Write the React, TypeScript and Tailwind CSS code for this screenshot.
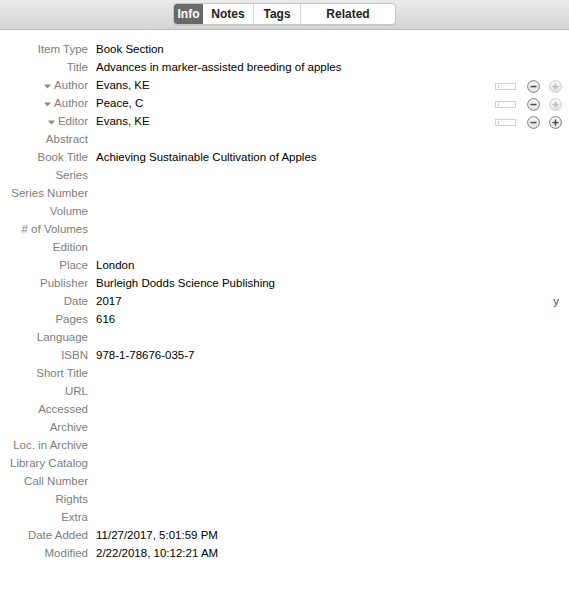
import React from "react";

const rows: { label: string; value?: string; creator?: boolean; plusOn?: boolean; extra?: string }[] = [
  { label: "Item Type", value: "Book Section" },
  { label: "Title", value: "Advances in marker-assisted breeding of apples" },
  { label: "Author", value: "Evans, KE", creator: true },
  { label: "Author", value: "Peace, C", creator: true },
  { label: "Editor", value: "Evans, KE", creator: true, plusOn: true },
  { label: "Abstract" },
  { label: "Book Title", value: "Achieving Sustainable Cultivation of Apples" },
  { label: "Series" },
  { label: "Series Number" },
  { label: "Volume" },
  { label: "# of Volumes" },
  { label: "Edition" },
  { label: "Place", value: "London" },
  { label: "Publisher", value: "Burleigh Dodds Science Publishing" },
  { label: "Date", value: "2017", extra: "y" },
  { label: "Pages", value: "616" },
  { label: "Language" },
  { label: "ISBN", value: "978-1-78676-035-7" },
  { label: "Short Title" },
  { label: "URL" },
  { label: "Accessed" },
  { label: "Archive" },
  { label: "Loc. in Archive" },
  { label: "Library Catalog" },
  { label: "Call Number" },
  { label: "Rights" },
  { label: "Extra" },
  { label: "Date Added", value: "11/27/2017, 5:01:59 PM" },
  { label: "Modified", value: "2/22/2018, 10:12:21 AM" },
];

function Circle({ plus, enabled }: { plus: boolean; enabled: boolean }) {
  const c = enabled ? "#4a4a4a" : "#bdbdbd";
  const id = `g${plus ? 1 : 0}${enabled ? 1 : 0}`;
  return (
    <svg width="13" height="13" viewBox="0 0 13 13">
      <defs>
        <linearGradient id={id} x1="0" y1="0" x2="0" y2="1">
          <stop offset="0" stopColor="#fafafa" />
          <stop offset="1" stopColor="#e2e2e2" />
        </linearGradient>
      </defs>
      <circle cx="6.5" cy="6.5" r="5.9" fill={`url(#${id})`} stroke={enabled ? "#7e7e7e" : "#cdcdcd"} strokeWidth="1" />
      <rect x="3.5" y="5.8" width="6" height="1.5" fill={c} />
      {plus && <rect x="5.75" y="3.5" width="1.5" height="6" fill={c} />}
    </svg>
  );
}

export default function App() {
  return (
    <div className="w-[569px] h-[594px] bg-white" style={{ fontFamily: "'Liberation Sans', Arial, sans-serif" }}>
      <div className="h-[30px] border-b border-[#b9b9b9] bg-gradient-to-b from-[#ebebeb] to-[#d5d5d5] flex justify-center pt-[3px]">
        <div className="flex h-[22px] rounded-[4px] border border-[#c4c4c4] bg-white overflow-hidden text-[12px] font-bold shadow-[0_1px_0_rgba(0,0,0,0.08)]">
          <div className="w-[29px] flex items-center justify-center bg-[#6a6a6a] text-white">Info</div>
          <div className="w-[51px] flex items-center justify-center text-[#222] border-r border-[#d6d6d6]">Notes</div>
          <div className="w-[47px] flex items-center justify-center text-[#222] border-r border-[#d6d6d6]">Tags</div>
          <div className="w-[94px] flex items-center justify-center text-[#222]">Related</div>
        </div>
      </div>
      <div className="pt-[11px] text-[11.5px]">
        {rows.map((r, i) => (
          <div key={i} className="flex h-[18px] items-center">
            <div className="w-[88px] shrink-0 text-right text-[#7d7d7d] flex justify-end items-center">
              {r.creator && (
                <svg width="7" height="5" viewBox="0 0 7 5" className="mr-[3px]">
                  <path d="M0 0.5 L7 0.5 L3.5 4.5 Z" fill="#8a8a8a" />
                </svg>
              )}
              {r.label}
            </div>
            <div className="pl-[8px] flex-1 text-black">{r.value}</div>
            {r.creator && (
              <div className="flex items-center pr-[7px]">
                <div className="w-[21px] h-[7px] border border-[#d0d0d0] bg-white mr-[11px] relative">
                  <div className="absolute left-[2px] top-[1px] w-[1px] h-[3px] bg-[#c8c8c8]" />
                </div>
                <div className="mr-[9px]"><Circle plus={false} enabled /></div>
                <Circle plus enabled={!!r.plusOn} />
              </div>
            )}
            {r.extra && <div className="pr-[10px] text-[#4a4a6a]">{r.extra}</div>}
          </div>
        ))}
      </div>
    </div>
  );
}
